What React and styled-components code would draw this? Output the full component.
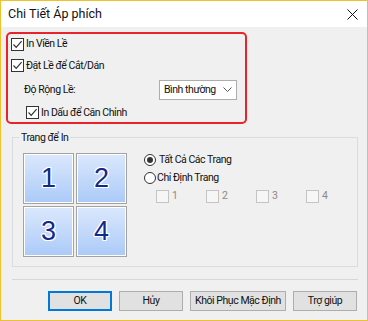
import React from "react";
import styled, { createGlobalStyle, css } from "styled-components";

const Global = createGlobalStyle`
  html, body { margin: 0; padding: 0; background: #f0f0f0; }
  * { box-sizing: border-box; }
  body { font-family: Roboto, "Noto Sans", sans-serif; font-size: 10.5px; letter-spacing: -0.45px; line-height: 14px; color: #111; }
`;

const Window = styled.div`
  width: 368px;
  height: 321px;
  border: 1px solid #efc22a;
  display: flex;
  flex-direction: column;
  background: #f0f0f0;
  overflow: hidden;
`;

const TitleBar = styled.div`
  height: 26px;
  flex: none;
  background: #fff;
  display: flex;
  align-items: center;
  justify-content: space-between;
  padding: 0 9px 0 7px;
  font-size: 12.5px;
  letter-spacing: 0;
`;

const Body = styled.div`
  flex: 1;
  display: flex;
  flex-direction: column;
  padding: 5px 9px 0 5px;
`;

const Highlight = styled.div`
  width: 241px;
  height: 92px;
  border: 2px solid #e8232b;
  border-radius: 5px;
  display: flex;
  flex-direction: column;
  padding-left: 3px;
`;

const Row = styled.div`
  height: ${(p) => p.$h}px;
  display: flex;
  align-items: center;
  padding-left: ${(p) => p.$indent || 0}px;
`;

const Label = styled.span`
  color: ${(p) => (p.$disabled ? "#8a8a8a" : "inherit")};
  margin-left: ${(p) => p.$gap ?? 2}px;
  white-space: nowrap;
`;

const FieldLabel = styled.span`
  width: 135px;
  flex: none;
  white-space: nowrap;
`;

const Box = styled.span`
  width: 13px;
  height: 13px;
  flex: none;
  border: 1px solid ${(p) => (p.$disabled ? "#c4c4c4" : "#333")};
  background: ${(p) => (p.$disabled ? "#f6f6f6" : "#fff")};
  display: flex;
  align-items: center;
  justify-content: center;
`;

const Check = ({ checked, disabled, label, gap }) => (
  <>
    <Box $disabled={disabled}>
      {checked && (
        <svg width="11" height="11" viewBox="0 0 11 11">
          <path d="M1.5 5.5 L4.2 8.3 L9.6 2.2" fill="none" stroke="#333" strokeWidth="1.2" />
        </svg>
      )}
    </Box>
    <Label $disabled={disabled} $gap={gap}>{label}</Label>
  </>
);

const Select = styled.div`
  width: 78px;
  height: 20px;
  border: 1px solid #adadad;
  background: #fff;
  display: flex;
  align-items: center;
  justify-content: space-between;
  padding: 0 4px 0 4px;
  white-space: nowrap;
`;

const Group = styled.div`
  position: relative;
  margin-top: 13px;
  margin-left: 6px;
  height: 130px;
  border: 1px solid #dcdcdc;
  display: flex;
  padding: 15px 0 0 10px;
  gap: 17px;
`;

const Legend = styled.span`
  position: absolute;
  top: -7px;
  left: 6px;
  padding: 0 2px;
  background: #f0f0f0;
  white-space: nowrap;
`;

const Tiles = styled.div`
  display: grid;
  grid-template-columns: 51px 51px;
  grid-template-rows: 51px 51px;
  gap: 2px;
  align-content: start;
`;

const Tile = styled.div`
  border: 1px solid #a3a3a3;
  box-shadow: inset 0 0 0 1px #fff;
  background: linear-gradient(#dbe8fd, #abcaf8);
  display: flex;
  align-items: center;
  justify-content: center;
  font-family: "Liberation Sans", Arial, sans-serif;
  font-size: 27px;
  letter-spacing: 0;
  line-height: 1;
  color: #14298a;
  text-shadow: 1px 0 0 #fff, -1px 0 0 #fff, 0 1px 0 #fff, 0 -1px 0 #fff,
    1px 1px 0 #fff, -1px -1px 0 #fff, 1px -1px 0 #fff, -1px 1px 0 #fff;
`;

const Options = styled.div`
  display: flex;
  flex-direction: column;
  margin-top: -2px;
`;

const OptRow = styled.div`
  height: 18px;
  display: flex;
  align-items: center;
  padding-left: ${(p) => p.$indent || 0}px;
`;

const RadioCircle = styled.span`
  width: 12px;
  height: 12px;
  flex: none;
  border: 1px solid #333;
  border-radius: 50%;
  background: #fff;
  display: flex;
  align-items: center;
  justify-content: center;
  ${(p) =>
    p.$on &&
    css`
      &::after {
        content: "";
        width: 6px;
        height: 6px;
        border-radius: 50%;
        background: #333;
      }
    `}
`;

const PageItem = styled.div`
  width: 50px;
  display: flex;
  align-items: center;
`;

const Separator = styled.div`
  margin: 12px 0 0 6px;
  height: 1px;
  background: #d7d7d7;
`;

const Buttons = styled.div`
  margin-top: 11px;
  display: flex;
  justify-content: flex-end;
  gap: 7px;
  padding-right: 1px;
`;

const Button = styled.div`
  height: 20px;
  width: ${(p) => p.$w || 64}px;
  border: 1px solid ${(p) => (p.$primary ? "#0078d7" : "#adadad")};
  box-shadow: ${(p) => (p.$primary ? "inset 0 0 0 1px #0078d7" : "none")};
  background: #e1e1e1;
  display: flex;
  align-items: center;
  justify-content: center;
  white-space: nowrap;
`;

export default function App() {
  return (
    <>
      <Global />
      <Window>
        <TitleBar>
          <span>Chi Tiết Áp phích</span>
          <svg width="11" height="11" viewBox="0 0 11 11">
            <path d="M0.5 0.5 L10.5 10.5 M10.5 0.5 L0.5 10.5" stroke="#111" strokeWidth="1" />
          </svg>
        </TitleBar>
        <Body>
          <Highlight>
            <Row $h={20}>
              <Check checked label="In Viền Lề" />
            </Row>
            <Row $h={23}>
              <Check checked label="Đặt Lề để Cắt/Dán" />
            </Row>
            <Row $h={26} $indent={13}>
              <FieldLabel>Độ Rộng Lề:</FieldLabel>
              <Select>
                <span>Bình thường</span>
                <svg width="9" height="6" viewBox="0 0 9 6">
                  <path d="M0.5 0.5 L4.5 4.5 L8.5 0.5" fill="none" stroke="#555" strokeWidth="1" />
                </svg>
              </Select>
            </Row>
            <Row $h={19} $indent={15}>
              <Check checked label="In Dấu để Căn Chỉnh" />
            </Row>
          </Highlight>
          <Group>
            <Legend>Trang để In</Legend>
            <Tiles>
              <Tile>1</Tile>
              <Tile>2</Tile>
              <Tile>3</Tile>
              <Tile>4</Tile>
            </Tiles>
            <Options>
              <OptRow>
                <RadioCircle $on />
                <Label $gap={3}>Tất Cả Các Trang</Label>
              </OptRow>
              <OptRow>
                <RadioCircle />
                <Label $gap={1}>Chỉ Định Trang</Label>
              </OptRow>
              <OptRow $indent={12}>
                {["1", "2", "3", "4"].map((n) => (
                  <PageItem key={n}>
                    <Check disabled label={n} gap={3} />
                  </PageItem>
                ))}
              </OptRow>
            </Options>
          </Group>
          <Separator />
          <Buttons>
            <Button $primary>OK</Button>
            <Button>Hủy</Button>
            <Button $w={96}>Khôi Phục Mặc Định</Button>
            <Button>Trợ giúp</Button>
          </Buttons>
        </Body>
      </Window>
    </>
  );
}
